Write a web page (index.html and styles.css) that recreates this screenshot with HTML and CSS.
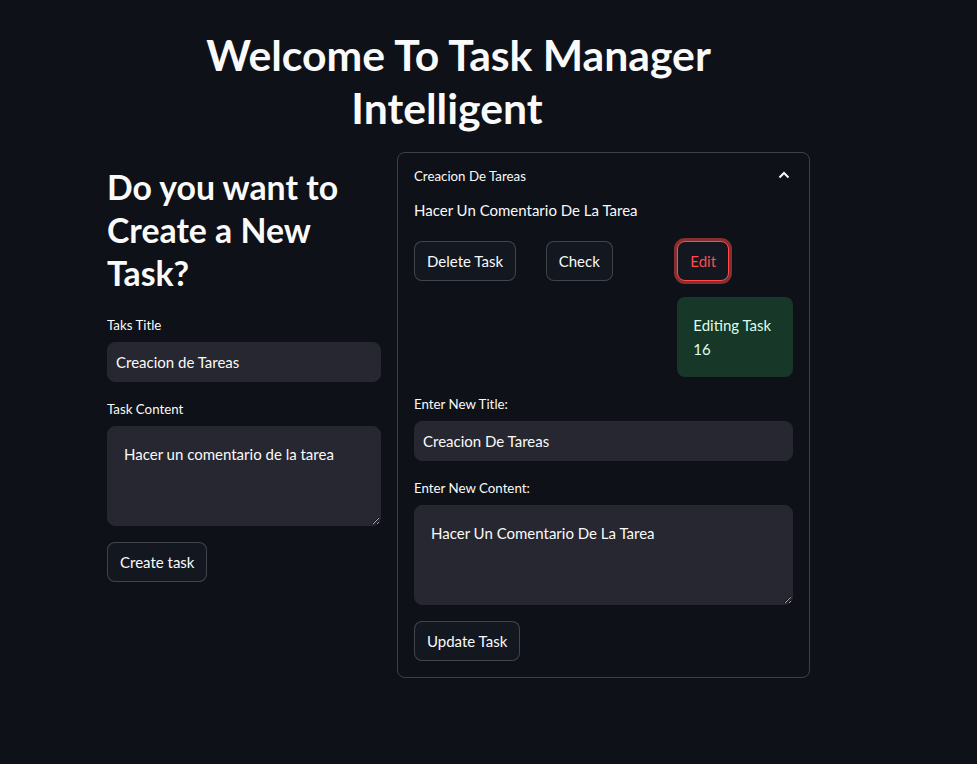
FILE: index.html
```html
<!DOCTYPE html>
<html lang="en">
<head>
<meta charset="utf-8">
<title>Task Manager Intelligent</title>
<link rel="stylesheet" href="styles.css">
</head>
<body>
<main class="main">
  <h1 class="page-title">Welcome To Task Manager Intelligent<span class="anchor-space"></span></h1>
  <div class="columns">
    <section class="col col-left">
      <h2 class="subtitle">Do you want to Create a New Task?</h2>
      <div class="field">
        <label class="field-label">Taks Title</label>
        <input class="text-input" type="text" value="Creacion de Tareas">
      </div>
      <div class="field">
        <label class="field-label">Task Content</label>
        <textarea class="text-area">Hacer un comentario de la tarea</textarea>
      </div>
      <div class="field">
        <button class="btn">Create task</button>
      </div>
    </section>
    <section class="col col-right">
      <div class="expander">
        <div class="expander-header">
          <span class="expander-title">Creacion De Tareas</span>
          <svg class="chevron" width="12" height="8" viewBox="0 0 12 8"><polyline points="1.5,6.5 6,2 10.5,6.5" fill="none" stroke="#fafafa" stroke-width="2"/></svg>
        </div>
        <div class="expander-body">
          <p class="task-text">Hacer Un Comentario De La Tarea</p>
          <div class="btn-row">
            <div class="btn-cell"><button class="btn">Delete Task</button></div>
            <div class="btn-cell"><button class="btn">Check</button></div>
            <div class="btn-cell">
              <button class="btn btn-active">Edit</button>
              <div class="success-box">Editing Task 16</div>
            </div>
          </div>
          <div class="field">
            <label class="field-label">Enter New Title:</label>
            <input class="text-input" type="text" value="Creacion De Tareas">
          </div>
          <div class="field">
            <label class="field-label">Enter New Content:</label>
            <textarea class="text-area">Hacer Un Comentario De La Tarea</textarea>
          </div>
          <div class="field">
            <button class="btn">Update Task</button>
          </div>
        </div>
      </div>
    </section>
  </div>
</main>
</body>
</html>
```

FILE: styles.css
```css
* { box-sizing: border-box; }

html, body {
  margin: 0;
  padding: 0;
  background: #0e1117;
  color: #fafafa;
  font-family: "Lato", "Noto Sans", sans-serif;
  font-size: 15px;
}

.main {
  width: 703px;
  margin: 0 0 0 107px;
}

.page-title {
  margin: 29px 0 0;
  font-size: 42.7px;
  line-height: 52.8px;
  font-weight: 700;
  text-align: center;
}

.anchor-space {
  display: inline-block;
  width: 23px;
}

.columns {
  display: grid;
  grid-template-columns: 274px 1fr;
  column-gap: 16px;
  margin-top: 17px;
  align-items: start;
}

.subtitle {
  margin: 14px 0 0;
  font-size: 33.8px;
  line-height: 43.2px;
  font-weight: 700;
}

.field { margin-top: 16px; }
.col-left .field:first-of-type { margin-top: 19px; }

.field-label {
  display: block;
  font-size: 13.3px;
  line-height: 22px;
  margin-bottom: 6px;
}

.text-input {
  display: block;
  width: 100%;
  height: 40px;
  border: 1px solid #262730;
  border-radius: 8px;
  background: #262730;
  color: #fafafa;
  font: inherit;
  font-size: 15px;
  line-height: 38px;
  padding: 0 8px;
  outline: none;
}

.text-area {
  display: block;
  width: 100%;
  height: 100px;
  border: 1px solid #262730;
  border-radius: 8px;
  background: #262730;
  color: #fafafa;
  font: inherit;
  font-size: 15px;
  line-height: 25.6px;
  padding: 15px 16px;
  resize: vertical;
  outline: none;
}

.btn {
  display: inline-flex;
  align-items: center;
  height: 40px;
  padding: 0 12px;
  border: 1px solid rgba(250, 250, 250, 0.2);
  border-radius: 8px;
  background: rgb(19, 23, 32);
  color: #fafafa;
  font: inherit;
  font-size: 15px;
}

.btn-active {
  border-color: #ff4b4b;
  color: #ff4b4b;
  box-shadow: 0 0 0 3px rgba(255, 75, 75, 0.5);
}

.expander {
  border: 1px solid rgba(250, 250, 250, 0.2);
  border-radius: 8px;
}

.expander-header {
  display: flex;
  justify-content: space-between;
  align-items: center;
  padding: 13px 19px 12px 16px;
  height: 45px;
}

.expander-title {
  font-size: 13.3px;
  line-height: 20px;
}

.chevron { display: block; margin-top: -1px; }

.expander-body {
  padding: 0 16px 16px;
}

.task-text {
  margin: 0 0 18px;
  line-height: 25px;
}

.btn-row {
  display: grid;
  grid-template-columns: repeat(3, 1fr);
  column-gap: 16px;
  align-items: start;
}

.btn-cell {
  display: flex;
  flex-direction: column;
  align-items: flex-start;
}

.success-box {
  margin-top: 16px;
  width: 100%;
  padding: 16px;
  border-radius: 8px;
  background: rgba(61, 213, 109, 0.2);
  color: rgb(223, 253, 233);
  line-height: 24px;
}
```
